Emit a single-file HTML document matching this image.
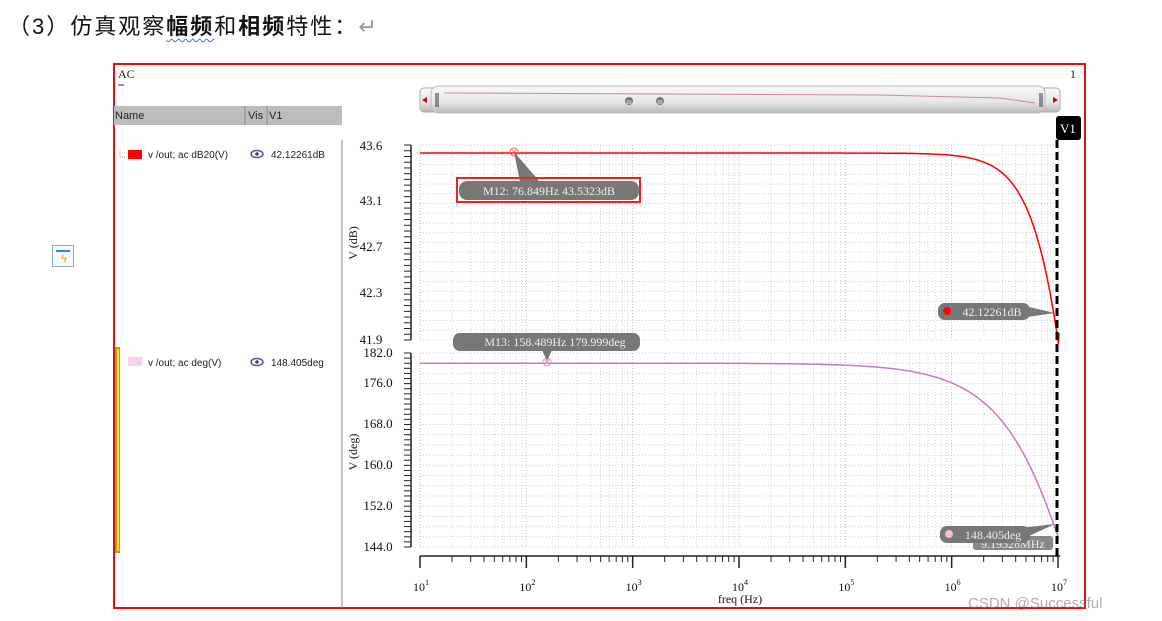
<!DOCTYPE html>
<html><head><meta charset="utf-8"><style>
body{margin:0;width:1162px;height:621px;background:#fff;position:relative;overflow:hidden;font-family:"Liberation Sans","Noto Sans CJK SC",sans-serif}
.hd{position:absolute;left:8px;top:9px;font-size:22px;color:#111;letter-spacing:2px}
.hd b{font-weight:bold}
.ab{position:absolute}
</style></head><body>
<div class="hd">（3）仿真观察<b style="text-decoration:underline wavy #3a6fd8;text-underline-offset:4px;text-decoration-thickness:1px">幅频</b>和<b>相频</b>特性：<span style="color:#999">↵</span></div>
<div class="ab" style="left:52px;top:245px;width:20px;height:20px;border:1px solid #9ab;background:#f4f8fc"><div style="margin:4px 3px;height:2px;background:#38c"></div><div style="position:absolute;left:8px;top:7px;color:#e90;font-size:11px">ϟ</div></div>
<svg class="ab" style="left:0;top:0" width="1162" height="621" id="s"></svg>
<script>
var s=document.getElementById('s'),h='';
function L(x1,y1,x2,y2,st,w,da){h+='<line x1="'+x1+'" y1="'+y1+'" x2="'+x2+'" y2="'+y2+'" stroke="'+st+'" stroke-width="'+(w||1)+'"'+(da?' stroke-dasharray="'+da+'"':'')+'/>';}
function T(x,y,t,sz,fill,anc,fam,extra){h+='<text x="'+x+'" y="'+y+'" font-size="'+sz+'" fill="'+(fill||'#222')+'" text-anchor="'+(anc||'start')+'" font-family="'+(fam||'Liberation Serif,DejaVu Serif,serif')+'" '+(extra||'')+'>'+t+'</text>';}
h+='<rect x="114" y="64" width="971" height="544" fill="#fff" stroke="#d11" stroke-width="2"/>';
T(118,78,'AC',12);T(1070,78,'1',12);L(118,85,124,85,'#333');
h+='<rect x="114" y="106" width="228" height="19" fill="#bdbdbd"/>';
L(245,106,245,125,'#888');L(267,106,267,125,'#888');
T(115,119,'Name',11,'#222','start','Liberation Sans');T(248,119,'Vis',11,'#222','start','Liberation Sans');T(269,119,'V1',11,'#222','start','Liberation Sans');
L(342,140,342,608,'#888');
L(120,148,120,157,'#999',1,'1 1');L(120,157,125,157,'#999',1,'1 1');
h+='<rect x="128" y="150" width="14" height="9" fill="#f00"/>';
T(148,158,'v /out; ac dB20(V)',10,'#222','start','Liberation Sans');
h+='<ellipse cx="257" cy="154" rx="6" ry="3.5" fill="none" stroke="#558" stroke-width="1.5"/><circle cx="257" cy="154" r="1.8" fill="#446"/>';
T(271,158,'42.12261dB',10,'#222','start','Liberation Sans');
h+='<rect x="115" y="347" width="5" height="206" fill="#b8a000"/><rect x="117" y="349" width="2" height="202" fill="#dd4"/>';
h+='<rect x="128" y="357" width="14" height="9" fill="#fbd0ef"/>';
T(148,366,'v /out; ac deg(V)',10,'#222','start','Liberation Sans');
h+='<ellipse cx="257" cy="362" rx="6" ry="3.5" fill="none" stroke="#558" stroke-width="1.5"/><circle cx="257" cy="362" r="1.8" fill="#446"/>';
T(271,366,'148.405deg',10,'#222','start','Liberation Sans');
h+='<defs><linearGradient id="g" x1="0" y1="0" x2="0" y2="1"><stop offset="0" stop-color="#fafafa"/><stop offset="0.6" stop-color="#e6e6e6"/><stop offset="1" stop-color="#b8b8b8"/></linearGradient></defs>';
h+='<rect x="420" y="88" width="640" height="24" rx="4" fill="url(#g)" stroke="#aaa"/>';
h+='<rect x="431" y="86" width="614" height="27" rx="7" fill="url(#g)" stroke="#bbb"/>';
h+='<polygon points="422,100 427,97 427,103" fill="#d00"/><polygon points="1058,100 1053,97 1053,103" fill="#d00"/>';
L(436,93,436,107,'#333');L(438,93,438,107,'#333');L(1040,93,1040,107,'#333');L(1042,93,1042,107,'#333');
h+='<polyline points="444,93 880,95 1000,98 1035,103" fill="none" stroke="#c8a" stroke-width="1"/>';
h+='<circle cx="629" cy="101" r="4" fill="#777"/><circle cx="660" cy="101" r="4" fill="#777"/>';
T(629,104,'m',7,'#fff','middle');T(660,104,'m',7,'#fff','middle');
var X0=420,X1=1058,dec=(X1-X0)/6;
function fx(f){return X0+(Math.log10(f)-1)*dec;}
var tops=[[145,340],[353,547]];
for(var k=0;k<2;k++){var a=tops[k][0],b=tops[k][1];
 for(var d=1;d<7;d++)for(var m=1;m<10;m++){var x=fx(m*Math.pow(10,d));L(x,a,x,b,m==1?'#bbb':'#d6d6d6',1,'1 2');}
 L(X1,a,X1,b,'#bbb',1,'1 2');
 var n=k==0?20:19;for(var i=0;i<=n;i++){var y=a+(b-a)*i/n;L(X0,y,X1,y,'#ccc',1,'1 2');}
 L(411,a,411,b,'#222',1.5);
 var nt=k==0?34:38;for(var i=0;i<=nt;i++){var y=a+(b-a)*i/nt;L(404,y,411,y,'#222',1);}
}
T(371,150,'43.6',13,'#111','middle');T(371,205,'43.1',13,'#111','middle');T(371,251,'42.7',13,'#111','middle');T(371,297,'42.3',13,'#111','middle');T(371,344,'41.9',13,'#111','middle');
T(378,357,'182.0',13,'#111','middle');T(378,387,'176.0',13,'#111','middle');T(378,428,'168.0',13,'#111','middle');T(378,469,'160.0',13,'#111','middle');T(378,510,'152.0',13,'#111','middle');T(378,551,'144.0',13,'#111','middle');
T(0,0,'V (dB)',12,'#111','middle',null,'transform="translate(357,243) rotate(-90)"');
T(0,0,'V (deg)',12,'#111','middle',null,'transform="translate(357,452) rotate(-90)"');
L(X0,556,X1+2,556,'#222',1.5);
for(var d=1;d<7;d++)for(var m=1;m<10;m++){var x=fx(m*Math.pow(10,d));L(x,556,x,m==1?568:562,'#222',m==1?1.5:1);}
L(X1,556,X1,568,'#222',1.5);
for(var d=1;d<=7;d++){var x=fx(Math.pow(10,d));h+='<text x="'+(x-7)+'" y="591" font-size="12" fill="#111" font-family="Liberation Serif,serif">10<tspan font-size="8" dy="-6">'+d+'</tspan></text>';}
T(740,603,'freq (Hz)',12,'#111','middle');
var fp=14.8e6,p1='',p2='';
for(var i=0;i<=300;i++){var lf=1+i*6.005/300,f=Math.pow(10,lf),r=f/fp;
 var db=43.53-10*Math.log10(1+r*r),ph=180-Math.atan(r)*180/Math.PI;
 var x=fx(f);p1+=x.toFixed(1)+','+(145+(43.6-db)*114.7).toFixed(1)+' ';p2+=x.toFixed(1)+','+(353+(182-ph)*5.1).toFixed(1)+' ';}
h+='<polyline points="'+p1+' 1059,333" fill="none" stroke="#f00" stroke-width="1.5"/>';
h+='<polyline points="'+p2+'" fill="none" stroke="#c47cc0" stroke-width="1.5"/>';
L(1057,140,1057,556,'#000',3,'8 4');
h+='<rect x="1056" y="116" width="25" height="24" rx="3" fill="#000"/>';T(1068,133,'V1',13,'#fff','middle');
h+='<circle cx="514" cy="152" r="4" fill="none" stroke="#f66"/>';L(511,149,517,155,'#f66');L(517,149,511,155,'#f66');
h+='<polygon points="514,152 520,182 540,182" fill="#777"/>';
h+='<rect x="459" y="181" width="180" height="19" rx="8" fill="#777"/>';
h+='<rect x="457" y="178" width="183" height="24" fill="none" stroke="#e22" stroke-width="2"/>';
T(549,195,'M12: 76.849Hz 43.5323dB',12,'#eee','middle');
h+='<circle cx="547" cy="362" r="4" fill="none" stroke="#d9c"/>';L(544,359,550,365,'#d9c');L(550,359,544,365,'#d9c');
h+='<polygon points="547,361 542,350 552,350" fill="#777"/>';
h+='<rect x="453" y="333" width="187" height="18" rx="7" fill="#777"/>';T(555,346,'M13: 158.489Hz 179.999deg',12,'#eee','middle');
h+='<polygon points="1055,313 1020,305 1020,318" fill="#777"/>';
h+='<rect x="938" y="303" width="92" height="17" rx="7" fill="#777"/><circle cx="947" cy="311" r="4" fill="#f00"/>';T(992,316,'42.12261dB',12,'#eee','middle');
h+='<polygon points="1055,524 1020,528 1020,540" fill="#777"/>';
h+='<rect x="973" y="536" width="80" height="14" rx="3" fill="#888"/>';T(1013,548,'9.19328MHz',12,'#eee','middle');
h+='<rect x="940" y="526" width="90" height="17" rx="7" fill="#777"/><circle cx="949" cy="534" r="4" fill="#fbc"/>';T(993,539,'148.405deg',12,'#eee','middle');
T(968,608,'CSDN @Successful',15,'rgba(120,120,120,0.6)','start','Liberation Sans');
s.innerHTML=h;
</script>
</body></html>
